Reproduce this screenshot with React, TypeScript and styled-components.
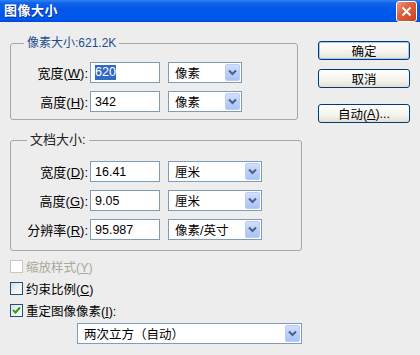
import styled, { createGlobalStyle } from "styled-components"

const GlobalStyle = createGlobalStyle`
  html, body {
    margin: 0;
    padding: 0;
  }
  body {
    width: 420px;
    height: 355px;
    overflow: hidden;
    background: #ededed;
    font-family: "Liberation Sans", "Noto Sans CJK SC", sans-serif;
    font-size: 12px;
    color: #000;
  }
`

const Dialog = styled.div`
  width: 420px;
  height: 355px;
  background: #ededed;
  display: flex;
  flex-direction: column;
`

const TitleBar = styled.div`
  height: 22px;
  flex: none;
  display: flex;
  align-items: flex-start;
  justify-content: space-between;
  padding: 0 3px 0 4px;
  background: linear-gradient(to bottom, #2f83f4 0%, #0f62e8 15%, #0056e6 45%, #0058ee 85%, #004ad8 100%);
`

const Title = styled.span`
  margin-top: 3px;
  color: #fff;
  font-weight: bold;
  font-size: 13px;
  line-height: 16px;
  letter-spacing: 0.5px;
  text-shadow: 1px 1px 0 #0b2f8c;
`

const CloseBtn = styled.div`
  width: 19px;
  height: 19px;
  margin-top: 1px;
  border: 1px solid #fff;
  border-radius: 3px;
  background: linear-gradient(135deg, #f09a7c 0%, #e2603f 40%, #c8411f 100%);
  display: flex;
  align-items: center;
  justify-content: center;
`

const Body = styled.div`
  display: flex;
  padding-left: 10px;
`

const LeftCol = styled.div`
  width: 292px;
  padding-top: 14px;
  display: flex;
  flex-direction: column;
`

const RightCol = styled.div`
  width: 92px;
  margin-left: 16px;
  padding-top: 19px;
  display: flex;
  flex-direction: column;
`

const Group = styled.fieldset<{ $width: number; $pad: string; $top?: number }>`
  width: ${(p) => p.$width}px;
  box-sizing: border-box;
  margin: ${(p) => p.$top ?? 0}px 0 0 0;
  padding: ${(p) => p.$pad};
  min-width: 0;
  border: 1px solid #a6a6a6;
  border-radius: 3px;
  display: flex;
  flex-direction: column;
  gap: 8px;
`

const Legend = styled.legend<{ $size: number; $color: string; $offset: number }>`
  margin-left: ${(p) => p.$offset}px;
  padding: 0 3px;
  font-size: ${(p) => p.$size}px;
  line-height: 14px;
  color: ${(p) => p.$color};
`

const Row = styled.div`
  display: flex;
  align-items: center;
  height: 21px;
`

const Label = styled.label`
  width: 79px;
  box-sizing: border-box;
  padding-right: 2px;
  text-align: right;
  font-size: 13px;
  white-space: nowrap;
`

const TextBox = styled.div`
  width: 70px;
  height: 21px;
  box-sizing: border-box;
  margin-right: 8px;
  padding-left: 4px;
  border: 1px solid #7f9db9;
  background: #fff;
  display: flex;
  align-items: center;
  font-size: 12.5px;
`

const Selected = styled.span`
  background: #316ac5;
  color: #fff;
  line-height: 15px;
`

const Select = styled.div<{ $width: number; $left?: number; $top?: number }>`
  width: ${(p) => p.$width}px;
  height: 21px;
  box-sizing: border-box;
  margin: ${(p) => p.$top ?? 0}px 0 0 ${(p) => p.$left ?? 0}px;
  padding: 0 1px 0 6px;
  border: 1px solid #7f9db9;
  background: #fff;
  display: flex;
  align-items: center;
  font-size: 12.5px;
`

const SelectText = styled.span`
  flex: 1;
  white-space: nowrap;
`

const DropBtn = styled.div`
  width: 15px;
  height: 17px;
  box-sizing: border-box;
  border: 1px solid #b9cdf6;
  border-radius: 2px;
  background: linear-gradient(to bottom, #d2e0fd 0%, #bccffa 50%, #aac2f5 100%);
  display: flex;
  align-items: center;
  justify-content: center;
`

const Button = styled.div<{ $default?: boolean; $gap?: number }>`
  height: 19px;
  box-sizing: border-box;
  margin-top: ${(p) => p.$gap ?? 0}px;
  border: 1px solid #003c74;
  border-radius: 3px;
  background: linear-gradient(to bottom, #ffffff 0%, #f4f3ee 60%, #e3e0d6 100%);
  box-shadow: ${(p) => (p.$default ? "inset 0 0 0 1px #a9c6f3" : "none")};
  display: flex;
  align-items: center;
  justify-content: center;
  font-size: 12.5px;
`

const CheckList = styled.div`
  margin-top: 4px;
  display: flex;
  flex-direction: column;
`

const CheckRow = styled.div<{ $disabled?: boolean }>`
  height: 22px;
  display: flex;
  align-items: center;
  gap: 3px;
  font-size: 12.5px;
  color: ${(p) => (p.$disabled ? "#aca899" : "#000")};
`

const Box = styled.div<{ $disabled?: boolean }>`
  width: 13px;
  height: 13px;
  box-sizing: border-box;
  border: 1px solid ${(p) => (p.$disabled ? "#cac8bb" : "#1c5180")};
  background: ${(p) => (p.$disabled ? "#fff" : "linear-gradient(135deg, #dcdcd7 0%, #f6f6f4 60%, #fff 100%)")};
  display: flex;
  align-items: center;
  justify-content: center;
`

const Chevron = () => (
  <svg width="9" height="7" viewBox="0 0 9 7">
    <polyline points="1,1.5 4.5,5 8,1.5" fill="none" stroke="#4d6185" strokeWidth="2" />
  </svg>
)

const Tick = () => (
  <svg width="9" height="9" viewBox="0 0 9 9">
    <polyline points="1,4 3.5,6.5 8,1.5" fill="none" stroke="#21a121" strokeWidth="2" />
  </svg>
)

function App() {
  return (
    <Dialog>
      <GlobalStyle />
      <TitleBar>
        <Title>图像大小</Title>
        <CloseBtn>
          <svg width="11" height="11" viewBox="0 0 11 11">
            <path d="M1.5 1.5 L9.5 9.5 M9.5 1.5 L1.5 9.5" stroke="#fff" strokeWidth="2" />
          </svg>
        </CloseBtn>
      </TitleBar>

      <Body>
        <LeftCol>
          {/* 像素大小 */}
          <Group $width={288} $pad="12px 0 7px 0">
            <Legend $size={12} $color="#1f4e8f" $offset={13}>像素大小:621.2K</Legend>
            <Row>
              <Label>宽度(<u>W</u>):</Label>
              <TextBox><Selected>620</Selected></TextBox>
              <Select $width={74}>
                <SelectText>像素</SelectText>
                <DropBtn><Chevron /></DropBtn>
              </Select>
            </Row>
            <Row>
              <Label>高度(<u>H</u>):</Label>
              <TextBox>342</TextBox>
              <Select $width={74}>
                <SelectText>像素</SelectText>
                <DropBtn><Chevron /></DropBtn>
              </Select>
            </Row>
          </Group>

          {/* 文档大小 */}
          <Group $width={292} $pad="14px 0 10px 0" $top={13}>
            <Legend $size={13} $color="#222" $offset={16}>文档大小:</Legend>
            <Row>
              <Label>宽度(<u>D</u>):</Label>
              <TextBox>16.41</TextBox>
              <Select $width={94}>
                <SelectText>厘米</SelectText>
                <DropBtn><Chevron /></DropBtn>
              </Select>
            </Row>
            <Row>
              <Label>高度(<u>G</u>):</Label>
              <TextBox>9.05</TextBox>
              <Select $width={94}>
                <SelectText>厘米</SelectText>
                <DropBtn><Chevron /></DropBtn>
              </Select>
            </Row>
            <Row>
              <Label>分辨率(<u>R</u>):</Label>
              <TextBox>95.987</TextBox>
              <Select $width={94}>
                <SelectText>像素/英寸</SelectText>
                <DropBtn><Chevron /></DropBtn>
              </Select>
            </Row>
          </Group>

          <CheckList>
            <CheckRow $disabled>
              <Box $disabled />
              <span>缩放样式(<u>Y</u>)</span>
            </CheckRow>
            <CheckRow>
              <Box />
              <span>约束比例(<u>C</u>)</span>
            </CheckRow>
            <CheckRow>
              <Box><Tick /></Box>
              <span>重定图像像素(<u>I</u>):</span>
            </CheckRow>
          </CheckList>

          <Select $width={225} $left={67} $top={2}>
            <SelectText>两次立方（自动）</SelectText>
            <DropBtn><Chevron /></DropBtn>
          </Select>
        </LeftCol>

        <RightCol>
          <Button $default>确定</Button>
          <Button $gap={9}>取消</Button>
          <Button $gap={16}>自动(<u>A</u>)...</Button>
        </RightCol>
      </Body>
    </Dialog>
  )
}

export default App
